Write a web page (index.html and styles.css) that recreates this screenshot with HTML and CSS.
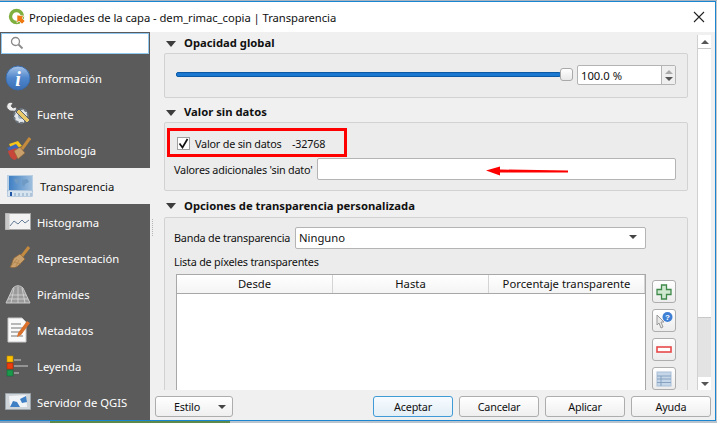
FILE: index.html
```html
<!DOCTYPE html>
<html lang="es">
<head>
<meta charset="utf-8">
<title>Propiedades de la capa</title>
<link rel="stylesheet" href="styles.css">
</head>
<body>
<div class="topstrip"></div>
<div class="window">
  <header class="titlebar">
    <svg class="logo" width="18" height="18" viewBox="0 0 18 18"><circle cx="8.5" cy="8.5" r="6" fill="none" stroke="#7fb03f" stroke-width="3.4"/><path d="M9 7l7 1-2 2 3 3-3 3-3-3-2 2z" fill="#ee7913" stroke="#fff" stroke-width=".6"/></svg>
    <span class="title">Propiedades de la capa - dem_rimac_copia | Transparencia</span>
    <svg class="close" width="12" height="12" viewBox="0 0 12 12"><path d="M1 1l10 10M11 1L1 11" stroke="#222" stroke-width="1.1" fill="none"/></svg>
  </header>
  <div class="body">
    <nav class="sidebar">
      <div class="search">
        <svg width="14" height="14" viewBox="0 0 14 14"><circle cx="5.500" cy="5.500" r="4" fill="none" stroke="#8a8a8a" stroke-width="1.300"/><path d="M8.500 8.500l4 4" stroke="#8a8a8a" stroke-width="1.800"/></svg>
      </div>
      <ul class="menu">
        <li class="item">
          <svg class="ico" width="26" height="26" viewBox="0 0 26 26"><defs><linearGradient id="ib" x1="0" y1="0" x2="0" y2="1"><stop offset="0" stop-color="#a9c6ea"/><stop offset=".5" stop-color="#4f86cc"/><stop offset="1" stop-color="#3a6fb4"/></linearGradient></defs><circle cx="13" cy="13" r="12" fill="url(#ib)" stroke="#3a6aa8"/><text x="13" y="21" class="info-i">i</text></svg>
          <span>Información</span>
        </li>
        <li class="item">
          <svg class="ico" width="26" height="26" viewBox="0 0 26 26"><path d="M2 4c1-3 4-3 6-2L6 5l2 2 3-1c1 2 0 5-3 4-2 0-3 0-4-1C3 8 1 7 2 4z" fill="#ececec" stroke="#555" stroke-width=".7"/><circle cx="16" cy="15" r="7" fill="#e4e7ea" stroke="#6b7680" stroke-width="2" stroke-dasharray="3 1.500"/><circle cx="16" cy="15" r="3" fill="#9fb0bf"/><path d="M11 11l11 11 3-3L14 8z" fill="#e8c868" stroke="#4b5563" stroke-width=".9"/></svg>
          <span>Fuente</span>
        </li>
        <li class="item">
          <svg class="ico" width="26" height="26" viewBox="0 0 26 26"><path d="M4 7l9-3 4 5-10 4z" fill="#f5c518"/><path d="M2 11l9-4 5 6-9 4z" fill="#3f66b5"/><path d="M3 14l8-3 5 6-6 6c-3 0-6-4-7-9z" fill="#c8453a"/><path d="M9 14l6-4 5 6-7 6z" fill="#c9a06c" stroke="#8c6233" stroke-width=".6"/><path d="M17 12l8-11" stroke="#c48a3e" stroke-width="3"/></svg>
          <span>Simbología</span>
        </li>
        <li class="item selected">
          <svg class="ico" width="26" height="22" viewBox="0 0 26 22"><defs><linearGradient id="mp" x1="0" y1="0" x2="1" y2="0"><stop offset="0" stop-color="#3f7fc4"/><stop offset="1" stop-color="#9dbedd"/></linearGradient></defs><rect x="0" y="0" width="26" height="17" fill="#b9cfe4"/><rect x="2" y="1" width="23" height="14" fill="url(#mp)"/><path d="M7 4h4l2 3-3 2-2-2zM15 5l5-1 2 3-4 2-1 3-2-3z" fill="#6e9ac4"/><rect x=".5" y="15.500" width="25" height="6" fill="#d6e4f0" stroke="#9fbad4" stroke-width=".6"/><path d="M8 18v3M12 18v3M16 18v3M20 18v3M24 18v3" stroke="#6f92b5" stroke-width=".8"/><rect x="3" y="17" width="2" height="4" fill="#2456a6"/></svg>
          <span>Transparencia</span>
        </li>
        <li class="item">
          <svg class="ico" width="26" height="18" viewBox="0 0 26 18"><rect x=".5" y=".5" width="25" height="16" fill="#f2f2f2" stroke="#a5a5a5"/><rect x=".5" y=".5" width="4" height="16" fill="#c9c9c9"/><path d="M5 13l4-5 4 3 4-4 3 3 4-3" fill="none" stroke="#55708f" stroke-width=".9"/></svg>
          <span>Histograma</span>
        </li>
        <li class="item">
          <svg class="ico" width="26" height="26" viewBox="0 0 26 26"><path d="M9 13l6-4 5 5-6 6c-3 3-6 3-9 2 2-2 2-6 4-9z" fill="#c9a06c" stroke="#8c6233" stroke-width=".7"/><path d="M9 17l7 2M7 20l5-6M11 21l3-6" stroke="#a67c45" stroke-width=".6"/><path d="M17 11l7-9" stroke="#c48a3e" stroke-width="3"/></svg>
          <span>Representación</span>
        </li>
        <li class="item">
          <svg class="ico" width="26" height="20" viewBox="0 0 26 20"><path d="M1 19L8 4c3-3 7-3 10 0l7 15z" fill="#9a9a9a" stroke="#c9c9c9"/><path d="M9 4l-3 15M13 3v16M17 4l3 15M5 11h16M3 15h20" stroke="#d8d8d8" stroke-width=".8"/></svg>
          <span>Pirámides</span>
        </li>
        <li class="item">
          <svg class="ico" width="26" height="26" viewBox="0 0 26 26"><path d="M3 1h14l4 4v20H3z" fill="#fafafa" stroke="#c8c8c8"/><path d="M6 7h10M6 11h12M6 15h12M6 19h12" stroke="#777" stroke-width="1.200"/><path d="M13 16l9-12 3 2-9 12-4 2z" fill="#d9702c"/></svg>
          <span>Metadatos</span>
        </li>
        <li class="item">
          <svg class="ico" width="26" height="22" viewBox="0 0 26 22"><rect x="2" y="1" width="6" height="6" fill="#ffc000" stroke="#b68a00" stroke-width=".6"/><rect x="2" y="8" width="6" height="6" fill="#ee3d0c" stroke="#a82a08" stroke-width=".6"/><rect x="2" y="15" width="6" height="6" fill="#1c9a4c" stroke="#0f6a32" stroke-width=".6"/><path d="M9 5h7M9 11h14M9 18h5" stroke="#a8a8a8" stroke-width="1.500"/></svg>
          <span>Leyenda</span>
        </li>
        <li class="item">
          <svg class="ico" width="26" height="18" viewBox="0 0 26 18"><path d="M.5.5h25v16H.5z" fill="#cfd4d9" stroke="#9aa2aa"/><path d="M4 3l17-1 1 12H5z" fill="#f1f4f7"/><path d="M5 14l3-6 4 1 3 5zM15 6l6-3 1 6-5 1z" fill="#3f7fc4"/></svg>
          <span>Servidor de QGIS</span>
        </li>
      </ul>
    </nav>
    <main class="main">
      <div class="splitter"></div>
      <div class="upper">
        <div class="scroller">
          <section>
            <h2 class="ghead"><i class="tri"></i>Opacidad global</h2>
            <div class="group g-opacity">
              <div class="groove"><i class="handle"></i></div>
              <div class="spin">
                <span class="spin-val">100.0 %</span>
                <span class="spin-btns"><i class="up"></i><i class="down"></i></span>
              </div>
            </div>
          </section>
          <section>
            <h2 class="ghead"><i class="tri"></i>Valor sin datos</h2>
            <div class="group g-nodata">
              <div class="check-row">
                <span class="check"><svg width="11" height="11" viewBox="0 0 11 11"><path d="M1.500 5.500l3 4 5-8.500" fill="none" stroke="#111" stroke-width="1.700"/></svg></span>
                <span class="check-label form-text">Valor de sin datos</span>
                <span class="check-val form-text">-32768</span>
              </div>
              <div class="field-row">
                <label class="form-text">Valores adicionales 'sin dato'</label>
                <div class="input"></div>
              </div>
              <div class="redbox"></div>
              <svg class="redarrow" width="84" height="10" viewBox="0 0 84 10"><path d="M0 4.500L14 .5v3L82 4.500v2L14 6.500v3z" fill="#f00"/></svg>
            </div>
          </section>
          <section>
            <h2 class="ghead ghead-tall"><i class="tri"></i>Opciones de transparencia personalizada</h2>
            <div class="group g-custom">
              <div class="combo-row">
                <label class="form-text">Banda de transparencia</label>
                <div class="combo"><span>Ninguno</span><i class="tri-sm"></i></div>
              </div>
              <div class="list-label form-text">Lista de píxeles transparentes</div>
              <div class="table-row">
                <div class="table">
                  <div class="thead"><span>Desde</span><span>Hasta</span><span>Porcentaje transparente</span></div>
                </div>
                <div class="tools">
                  <button class="tool"><svg width="16" height="16" viewBox="0 0 16 16"><path d="M5.500 1h5v4.500H15v5h-4.500V15h-5v-4.500H1v-5h4.500z" fill="#cfe8cf" stroke="#3f8a4b" stroke-width="1.300"/></svg></button>
                  <button class="tool"><svg width="20" height="20" viewBox="0 0 20 20"><path d="M3 4l7 7H7l2 5-2 1-2-5-2 2z" fill="#e8e8e8" stroke="#9a9a9a"/><circle cx="13.500" cy="6" r="5" fill="#3e7fd6"/><text x="13.500" y="9" class="q-mark">?</text></svg></button>
                  <button class="tool"><svg width="16" height="8" viewBox="0 0 16 8"><rect x="1" y="1" width="14" height="5" fill="#fff" stroke="#e8484a" stroke-width="1.600"/></svg></button>
                  <button class="tool"><svg width="16" height="16" viewBox="0 0 16 16"><rect x="1" y="1" width="14" height="14" fill="#c5d6e8" stroke="#a9c0d8"/><path d="M1 5h14M5 5v10M1 8h14M1 11.500h14" stroke="#7f9dbd" stroke-width=".9"/></svg></button>
                </div>
              </div>
            </div>
          </section>
        </div>
        <div class="scrollbar">
          <div class="sb-btn"><i class="sb-up"></i></div>
          <div class="sb-thumb"></div>
          <div class="sb-track"></div>
          <div class="sb-btn"><i class="sb-down"></i></div>
        </div>
      </div>
      <footer class="footer">
        <button class="btn btn-style"><span>Estilo</span><i class="tri-sm"></i></button>
        <div class="footer-right">
          <button class="btn btn-default">Aceptar</button>
          <button class="btn">Cancelar</button>
          <button class="btn">Aplicar</button>
          <button class="btn">Ayuda</button>
        </div>
      </footer>
    </main>
  </div>
</div>
<div class="bottomstrip"></div>
</body>
</html>
```
FILE: styles.css
```css
* { box-sizing: border-box; }
html, body { margin: 0; padding: 0; }
body {
  width: 717px; height: 423px; overflow: hidden;
  background: #c9c9c9;
  font: 11.25px "Noto Sans", "Open Sans", sans-serif;
  color: #111;
}
.form-text { font-size: 10.8px; letter-spacing: -0.2px; }
.topstrip { height: 1px; background: #a9b4c0; }
.bottomstrip { height: 2px; background: linear-gradient(90deg, #8aa0b8 0 50px, #5d8a4a 50px 230px, #b9c4cf 230px); }
.window {
  width: 716px; height: 420px;
  border-top: 1px solid #1a86d0;
  border-bottom: 1px solid #1a86d0;
  border-right: 1px solid #1a86d0;
  display: flex; flex-direction: column;
}
.titlebar {
  height: 30px; flex: none; background: #fff;
  display: flex; align-items: center; padding: 0 10px 0 8px;
}
.logo { margin-right: 3px; }
.title { flex: 1; letter-spacing: -0.05px; }
.body { flex: 1; display: flex; min-height: 0; }
.sidebar { width: 150px; flex: none; background: #5b5b5b; display: flex; flex-direction: column; }
.search {
  height: 21px; margin: 1px 0 0 1px; width: 148px; background: #fff;
  border: 1px solid #90c8f0; padding: 2px 0 0 8px;
}
.menu { list-style: none; margin: 6px 0 0; padding: 0; }
.item {
  height: 36px; display: flex; align-items: center; color: #fff;
  padding-left: 5px; white-space: nowrap;
}
.item .ico { width: 26px; flex: none; margin-right: 6px; }
.item.selected { background: #f0f0f0; color: #111; padding-left: 7px; }
.item.selected .ico { margin-right: 7px; }
.info-i { font: italic bold 20px "Liberation Serif", serif; fill: #fff; text-anchor: middle; }
.q-mark { font: bold 8px "Liberation Sans", sans-serif; fill: #fff; text-anchor: middle; }
.main { position: relative; flex: 1; min-width: 0; background: #f0f0f0; display: flex; flex-direction: column; }
.splitter { position: absolute; left: 2px; top: 187px; width: 1px; height: 17px; border-left: 1px dotted #b4b4b4; }
.upper { height: 358px; flex: none; display: flex; }
.scroller { flex: 1; min-width: 0; overflow: hidden; padding: 3px 0 0 14px; }
.ghead {
  margin: 0; height: 18px; padding: 0 0 3px 2px; font-size: 11.25px; font-weight: 700; color: #111;
  display: flex; align-items: center; white-space: nowrap;
}
.ghead-tall { margin-top: -1px; height: 19px; padding-bottom: 5px; }
.tri {
  width: 0; height: 0; margin-right: 8px; margin-top: 2px;
  border-left: 5px solid transparent; border-right: 5px solid transparent; border-top: 6px solid #3c3c3c;
}
.group {
  position: relative; width: 524px;
  background: #ececec; border: 1px solid #d2d2d2; border-radius: 2px;
  margin-bottom: 6px;
}
.g-opacity { height: 45px; display: flex; align-items: flex-start; padding: 11px 0 0 11px; }
.groove {
  position: relative; width: 385px; height: 5px; margin-top: 7px;
  background: #1a78d0; border: 1px solid #0c5aa6; border-radius: 2px;
}
.handle {
  position: absolute; right: -13px; top: -5px; width: 13px; height: 13px;
  background: linear-gradient(#fff, #e8e8e8); border: 1px solid #a9a9a9; border-radius: 3px;
}
.spin {
  width: 99px; height: 20px; margin-left: 16px; background: #fff;
  border: 1px solid #b4b4b4; border-radius: 2px; display: flex; align-items: center;
}
.spin-val { flex: 1; padding-left: 3px; }
.spin-btns {
  width: 14px; height: 18px; background: #efefef; border-left: 1px solid #b4b4b4;
  display: flex; flex-direction: column; align-items: center; justify-content: center; gap: 3px;
}
.up { width: 0; height: 0; border: 4px solid transparent; border-top: 0; border-bottom: 4px solid #aaa; }
.down { width: 0; height: 0; border: 4px solid transparent; border-bottom: 0; border-top: 4px solid #555; }
.g-nodata { height: 69px; padding: 13px 0 0 9px; margin-bottom: 8px; }
.check-row { display: flex; align-items: center; height: 14px; padding-left: 3px; white-space: nowrap; }
.check {
  width: 13px; height: 13px; background: #fff; border: 1px solid #a0a0a0;
  display: flex; align-items: center; justify-content: center; margin-right: 5px;
}
.check-label { width: 97px; flex: none; }
.field-row { display: flex; align-items: center; margin-top: 8px; height: 22px; white-space: nowrap; }
.field-row label { width: 143px; flex: none; }
.input { width: 359px; height: 22px; background: #fff; border: 1px solid #b4b4b4; border-radius: 2px; }
.redbox {
  position: absolute; left: 2px; top: 5px; width: 180px; height: 29px;
  border: 3px solid #f00;
}
.redarrow { position: absolute; left: 321px; top: 43px; }
.g-custom { height: 200px; padding: 9px 0 0 9px; }
.combo-row { display: flex; align-items: center; height: 22px; white-space: nowrap; }
.combo-row label { width: 121px; flex: none; padding-bottom: 2px; }
.combo {
  width: 351px; height: 22px; background: #fff; border: 1px solid #b4b4b4; border-radius: 2px;
  display: flex; align-items: center; justify-content: space-between; padding: 0 8px 2px 3px;
}
.tri-sm { width: 0; height: 0; border: 4px solid transparent; border-bottom: 0; border-top: 4px solid #444; }
.list-label { height: 16px; margin-top: 5px; line-height: 16px; }
.table-row { display: flex; margin: 4px 0 0 2px; align-items: flex-start; }
.table { width: 470px; height: 150px; background: #fff; border: 1px solid #a8a8a8; }
.thead {
  display: grid; grid-template-columns: 156px 156px 1fr; height: 19px;
  background: linear-gradient(#fff, #f4f4f4); border-bottom: 1px solid #a8a8a8;
}
.thead span { text-align: center; line-height: 18px; border-right: 1px solid #d4d4d4; }
.tools { display: flex; flex-direction: column; gap: 6px; margin: 6px 0 0 6px; }
.tool {
  width: 24px; height: 23px; padding: 0; background: linear-gradient(#fff, #ececec);
  border: 1px solid #adadad; border-radius: 3px;
  display: flex; align-items: center; justify-content: center;
}
.scrollbar { width: 14px; flex: none; margin: 3px 4px 0 9px; display: flex; flex-direction: column; border-left: 1px solid #d0d0d0; }
.sb-btn { height: 13px; flex: none; background: #fff; display: flex; align-items: center; justify-content: center; }
.sb-thumb { height: 270px; background: #fff; border-top: 1px solid #c8c8c8; border-bottom: 1px solid #c8c8c8; }
.sb-track { flex: 1; background: #e3e3e3; }
.sb-up { width: 0; height: 0; border: 4px solid transparent; border-top: 0; border-bottom: 4px solid #555; }
.sb-down { width: 0; height: 0; border: 4px solid transparent; border-bottom: 0; border-top: 4px solid #555; }
.footer { flex: 1; display: flex; justify-content: space-between; align-items: flex-start; padding: 6px 4px 0 5px; }
.footer-right { display: flex; gap: 6px; }
.btn {
  width: 80px; height: 21px; padding: 0; font: inherit; font-size: 10.8px; letter-spacing: -0.2px; color: #111;
  background: linear-gradient(#fff, #efefef); border: 1px solid #adadad; border-radius: 3px;
}
.btn-default { border-color: #3f9ad6; background: linear-gradient(#f6fbff, #e4eef6); }
.btn-style { width: 78px; display: flex; align-items: center; justify-content: space-between; padding: 0 6px 0 18px; }
```
